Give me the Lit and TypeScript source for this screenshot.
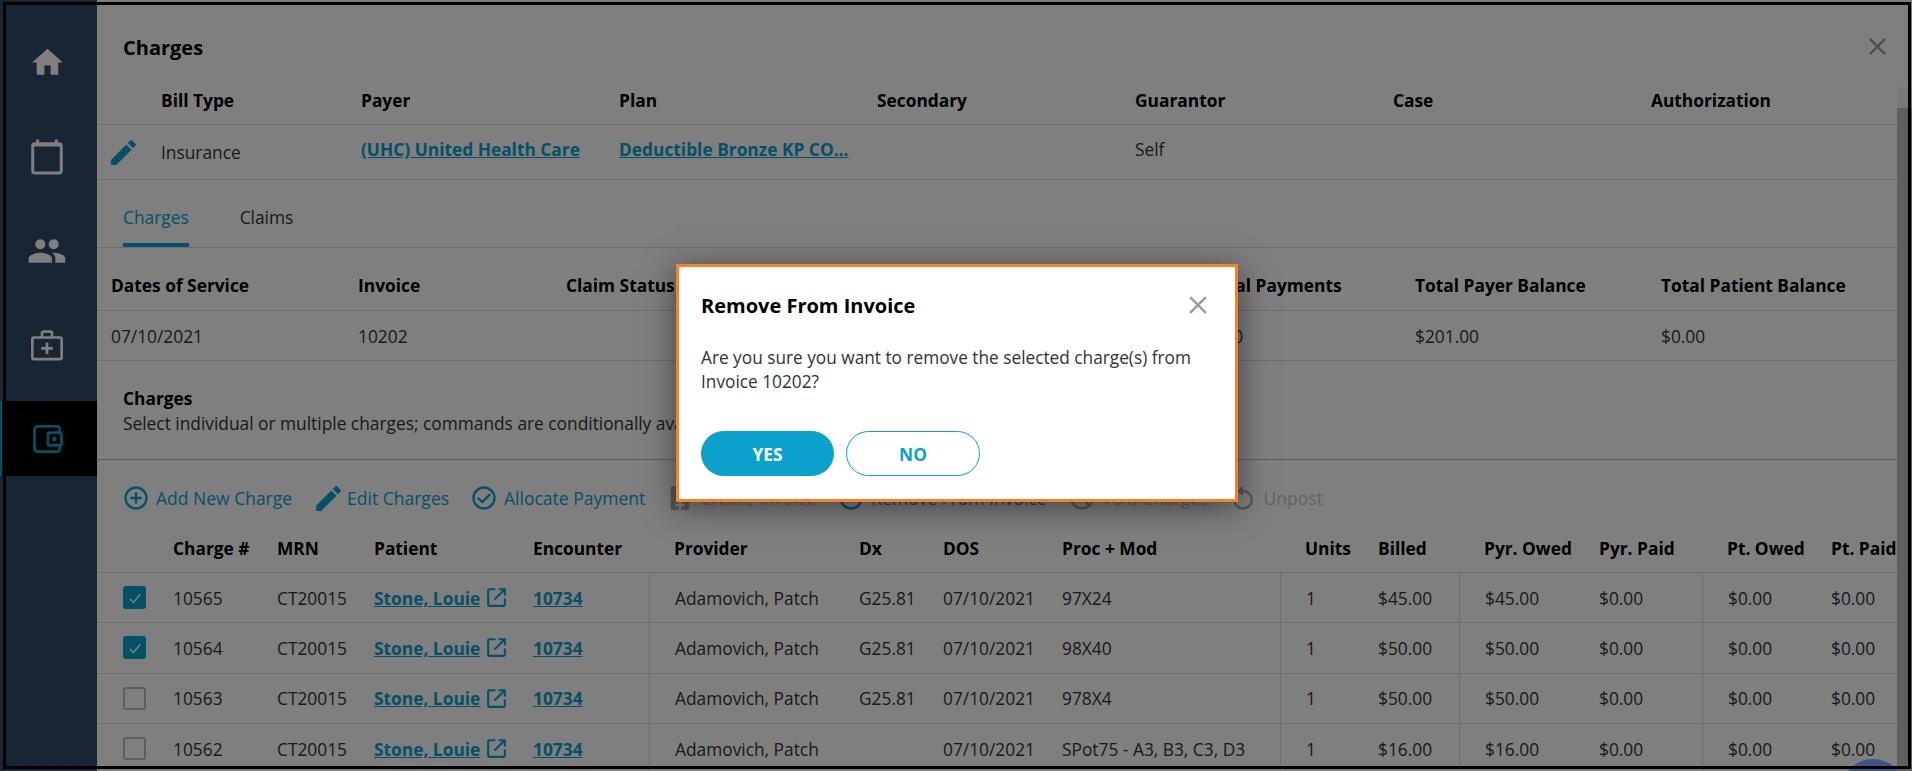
import { LitElement, css, html, svg } from "lit";
import { customElement } from "lit/decorators.js";

type Charge = {
  checked: boolean;
  id: string;
  dx: string;
  proc: string;
  billed: string;
};

const charges: Charge[] = [
  { checked: true, id: "10565", dx: "G25.81", proc: "97X24", billed: "$45.00" },
  { checked: true, id: "10564", dx: "G25.81", proc: "98X40", billed: "$50.00" },
  { checked: false, id: "10563", dx: "G25.81", proc: "978X4", billed: "$50.00" },
  { checked: false, id: "10562", dx: "", proc: "SPot75 - A3, B3, C3, D3", billed: "$16.00" },
];

const icon = (size: number, body: unknown, cls = "") =>
  html`<svg class=${cls} width=${size} height=${size} viewBox="0 0 24 24" fill="currentColor">${body}</svg>`;

const pencil = svg`<path d="M3 17.25V21h3.75L17.81 9.94l-3.75-3.75L3 17.25zM20.71 7.04a1 1 0 0 0 0-1.41l-2.34-2.34a1 1 0 0 0-1.41 0l-1.83 1.83 3.75 3.75 1.83-1.83z"/>`;
const close = svg`<path d="M19 6.41 17.59 5 12 10.59 6.41 5 5 6.41 10.59 12 5 17.59 6.41 19 12 13.41 17.59 19 19 17.59 13.41 12z"/>`;
const home = svg`<path d="M10 20v-6h4v6h5v-8h3L12 3 2 12h3v8z"/>`;
const calendar = svg`<path fill-rule="evenodd" d="M5 3.6h.8V2h1.7v1.6h9V2h1.7v1.6h.8a2 2 0 0 1 2 2V20a2 2 0 0 1-2 2H5a2 2 0 0 1-2-2V5.6a2 2 0 0 1 2-2zM4.7 6v14.3h14.6V6z"/>`;
const people = svg`<path d="M16 11a3 3 0 1 0 0-6 3 3 0 0 0 0 6zm-8 0a3 3 0 1 0 0-6 3 3 0 0 0 0 6zm0 2c-2.33 0-7 1.17-7 3.5V19h14v-2.5C15 14.17 10.33 13 8 13zm8 0c-.29 0-.62.02-.97.05C16.19 13.89 17 15.02 17 16.5V19h6v-2.5c0-2.33-4.67-3.5-7-3.5z"/>`;
const medical = svg`<g fill="none" stroke="currentColor" stroke-width="1.6"><rect x="3.2" y="7.5" width="17.6" height="13" rx="1"/><path d="M9 7.5V5a1 1 0 0 1 1-1h4a1 1 0 0 1 1 1v2.5M12 10.5v7M8.5 14h7"/></g>`;
const wallet = svg`<g fill="none" stroke="currentColor" stroke-width="1.7"><rect x="3.5" y="4" width="16" height="16" rx="2"/><rect x="12" y="8" width="8.5" height="8" rx="1" fill="#000"/></g><circle cx="16" cy="12" r="1.5"/>`;
const plusCircle = svg`<path d="M13 7h-2v4H7v2h4v4h2v-4h4v-2h-4z"/><path d="M12 2a10 10 0 1 0 0 20 10 10 0 0 0 0-20zm0 18a8 8 0 1 1 0-16 8 8 0 0 1 0 16z"/>`;
const checkCircle = svg`<path d="M12 2a10 10 0 1 0 0 20 10 10 0 0 0 0-20zm0 18a8 8 0 1 1 0-16 8 8 0 0 1 0 16z"/><path d="m16.6 8-6.1 6.2-3.1-3.1L6 12.5l4.5 4.5L18 9.4z"/>`;
const ring = svg`<path d="M12 2a10 10 0 1 0 0 20 10 10 0 0 0 0-20zm0 18a8 8 0 1 1 0-16 8 8 0 0 1 0 16z"/>`;
const slashed = svg`<path d="M12 2a10 10 0 1 0 0 20 10 10 0 0 0 0-20zm0 18a8 8 0 1 1 0-16 8 8 0 0 1 0 16z"/><path d="M18.4 19.8 4.2 5.6l1.4-1.4 14.2 14.2z"/>`;
const doc = svg`<path d="M5 2h14a1 1 0 0 1 1 1v18a1 1 0 0 1-1 1H5a1 1 0 0 1-1-1V3a1 1 0 0 1 1-1z"/><path fill="#fff" d="M11 14h2v3h3v2h-3v3h-2v-3H8v-2h3z"/>`;
const undo = svg`<path d="M12 5V1.5L7 6l5 4.5V7a6.5 6.5 0 1 1-6.5 6.5h-2A8.5 8.5 0 1 0 12 5z"/>`;
const external = svg`<path d="M19 19H5V5h6V3H5a2 2 0 0 0-2 2v14a2 2 0 0 0 2 2h14a2 2 0 0 0 2-2v-6h-2z"/><path d="M14 3v2h3.6l-8.3 8.3 1.4 1.4L19 6.4V10h2V3z"/>`;

@customElement("app-root")
export class AppRoot extends LitElement {
  static styles = css`
    :host {
      display: block;
      font-family: "Open Sans", "Liberation Sans", sans-serif;
      font-size: 17.33px;
      color: #333;
    }
    * {
      box-sizing: border-box;
    }

    .page {
      height: 771px;
      display: flex;
      background: #fff;
      overflow: hidden;
      position: relative;
    }

    .side {
      width: 97px;
      flex: none;
      background: #324a66;
      color: #fff;
      display: flex;
      flex-direction: column;
      padding-top: 25px;
    }
    .side div {
      height: 75px;
      flex: none;
      margin-bottom: 19px;
      display: flex;
      align-items: center;
      justify-content: center;
    }
    .side svg {
      margin-left: -3px;
    }
    .side .on {
      background: #000;
      color: #0ba1cc;
      border-left: 2px solid #0ba1cc;
      margin-bottom: 0;
    }

    .main {
      flex: 1;
      min-width: 0;
      display: flex;
      flex-direction: column;
      position: relative;
      padding-right: 15px;
    }
    .main > * {
      flex: none;
    }

    h1 {
      margin: 0;
      font-size: 20px;
      font-weight: 700;
      color: #000;
      line-height: 24px;
      padding: 36px 0 0 26px;
      height: 80px;
    }
    .x {
      position: absolute;
      top: 32px;
      right: 20px;
      color: #9c9c9c;
      display: flex;
    }

    .row {
      display: grid;
      align-items: center;
      border-bottom: 1px solid #ddd;
      white-space: nowrap;
    }
    .head {
      font-weight: 700;
      color: #000;
    }
    a {
      color: #0ba1cc;
      font-weight: 700;
      text-decoration: underline;
    }

    .bill {
      grid-template-columns: 64px 200px 258px 258px 258px 258px 258px 1fr;
    }
    .bill.head {
      height: 45px;
      padding-bottom: 5px;
    }
    .bill.body {
      height: 55px;
    }
    .bill .edit {
      color: #0ba1cc;
      padding-left: 10px;
      display: flex;
    }
    .bill .nudge {
      margin-top: -6px;
    }

    .tabs {
      display: flex;
      gap: 51px;
      padding-left: 26px;
      height: 68px;
      border-bottom: 1px solid #ddd;
      align-items: stretch;
    }
    .tabs span {
      padding-top: 25px;
    }
    .tabs .on {
      color: #0ba1cc;
      border-bottom: 4px solid #0ba1cc;
    }

    .sum {
      padding-left: 14px;
    }
    .sum.head {
      grid-template-columns: 247px 208px 321px 320px 208px 246px 1fr;
      height: 63px;
      padding-top: 12px;
    }
    .sum.body {
      grid-template-columns: 247px 208px 321px 312px 216px 246px 1fr;
      height: 50px;
    }

    .note {
      height: 99px;
      padding: 25px 0 0 26px;
      line-height: 25px;
      border-bottom: 1px solid #bbb;
      white-space: nowrap;
    }
    .note b {
      display: block;
      font-weight: 700;
      color: #000;
    }

    .tools {
      display: flex;
      align-items: center;
      height: 76px;
      padding-left: 25px;
      color: #0ba1cc;
      font-size: 17.5px;
      gap: 21px;
      white-space: nowrap;
    }
    .tools span {
      display: flex;
      align-items: center;
      gap: 6px;
    }
    .tools .pen {
      margin: 0 -4px 0 -1px;
    }
    .tools .off {
      color: #c6c6c6;
    }
    .tools .off svg {
      color: #aaa;
    }

    .grid {
      grid-template-columns: 76px 104px 97px 159px 116px 210px 84px 119px 218px 98px 81px 140px 103px 129px 1fr;
    }
    .grid.head {
      height: 37px;
      padding-bottom: 14px;
    }
    .grid.body {
      height: 50.33px;
      align-items: stretch;
    }
    .grid.body > * {
      display: flex;
      align-items: center;
    }
    .grid .rule {
      border-left: 1px solid #ddd;
    }
    .grid .pad {
      padding-left: 25px;
    }
    .box {
      margin-left: 26px;
      width: 23px;
      height: 23px;
      border: 2px solid #bdbdbd;
      border-radius: 3px;
      color: #fff;
      display: flex;
      align-items: center;
      justify-content: center;
    }
    .box.on {
      background: #0ba1cc;
      border-color: #0ba1cc;
    }
    .ext {
      color: #0ba1cc;
      margin-left: 4px;
    }

    .track {
      position: absolute;
      top: 87px;
      right: 0;
      bottom: 0;
      width: 15px;
      background: #f1f1f1;
      padding-top: 21px;
    }
    .thumb {
      height: 100%;
      background: #bfbfbf;
    }

    .chat {
      position: absolute;
      right: 7px;
      bottom: -52px;
      width: 64px;
      height: 64px;
      border-radius: 50%;
      background: #7aaaff;
    }

    .shade {
      position: absolute;
      inset: 0;
      background: rgba(0, 0, 0, 0.5);
      display: flex;
      align-items: flex-start;
      justify-content: center;
    }
    .frame {
      position: absolute;
      top: 2px;
      left: 3px;
      right: 1px;
      bottom: 2px;
      border: 3px solid #000;
      pointer-events: none;
    }

    .dlg {
      margin: 264px 0 0 2px;
      width: 562px;
      height: 238px;
      background: #fff;
      border: 3px solid #f97f2a;
      padding: 23px 22px 0 22px;
      box-shadow: 0 5px 30px rgba(0, 0, 0, 0.5);
      position: relative;
    }
    .dlg h2 {
      margin: 0 0 24px;
      font-size: 20px;
      line-height: 32px;
      font-weight: 700;
      color: #000;
    }
    .dlg p {
      margin: 0;
      font-size: 17.25px;
      line-height: 24px;
    }
    .dlg .x {
      top: 23px;
      right: 22px;
    }
    .btns {
      display: flex;
      gap: 12px;
      margin-top: 37px;
    }
    button {
      width: 134px;
      height: 45px;
      border-radius: 23px;
      border: 1px solid #0ba1cc;
      background: #fff;
      color: #0ba1cc;
      font: 700 17.33px "Open Sans", sans-serif;
    }
    button.yes {
      width: 133px;
      background: #0ba1cc;
      color: #fff;
    }
  `;

  private renderCharge(c: Charge) {
    return html`<div class="row grid body">
      <div>
        <span class="box ${c.checked ? "on" : ""}">
          ${c.checked
            ? html`<svg width="18" height="18" viewBox="0 0 24 24" fill="none" stroke="currentColor" stroke-width="2"><path d="m5 13 5 5 9-11" /></svg>`
            : ""}
        </span>
      </div>
      <div>${c.id}</div>
      <div>CT20015</div>
      <div><a>Stone, Louie</a>${icon(25, external, "ext")}</div>
      <div><a>10734</a></div>
      <div class="rule pad">Adamovich, Patch</div>
      <div>${c.dx}</div>
      <div>07/10/2021</div>
      <div>${c.proc}</div>
      <div class="rule pad">1</div>
      <div>${c.billed}</div>
      <div class="rule pad">${c.billed}</div>
      <div>$0.00</div>
      <div class="rule pad">$0.00</div>
      <div>$0.00</div>
    </div>`;
  }

  render() {
    return html`<div class="page">
      <nav class="side">
        <div>${icon(37, home)}</div>
        <div>${icon(42, calendar)}</div>
        <div>${icon(40, people)}</div>
        <div>${icon(40, medical)}</div>
        <div class="on">${icon(38, wallet)}</div>
      </nav>
      <main class="main">
        <h1>Charges</h1>
        <span class="x">${icon(29, close)}</span>

        <div class="row bill head">
          <span></span><span>Bill Type</span>
          <span>Payer</span><span>Plan</span><span>Secondary</span>
          <span>Guarantor</span><span>Case</span><span>Authorization</span>
        </div>
        <div class="row bill body">
          <span class="edit">${icon(33, pencil)}</span>
          <span>Insurance</span>
          <a class="nudge">(UHC) United Health Care</a>
          <a class="nudge">Deductible Bronze KP CO...</a>
          <span></span>
          <span class="nudge">Self</span>
          <span></span><span></span>
        </div>

        <div class="tabs"><span class="on">Charges</span><span>Claims</span></div>

        <div class="row sum head">
          <span>Dates of Service</span><span>Invoice</span><span>Claim Status</span>
          <span></span><span>Total Payments</span>
          <span>Total Payer Balance</span><span>Total Patient Balance</span>
        </div>
        <div class="row sum body">
          <span>07/10/2021</span><span>10202</span><span></span><span></span>
          <span>$0.00</span><span>$201.00</span><span>$0.00</span>
        </div>

        <div class="note">
          <b>Charges</b>
          Select individual or multiple charges; commands are conditionally available
        </div>

        <div class="tools">
          <span>${icon(28, plusCircle)}Add New Charge</span>
          <span>${icon(33, pencil, "pen")}Edit Charges</span>
          <span>${icon(28, checkCircle)}Allocate Payment</span>
          <span class="off">${icon(28, doc)}Create Invoice</span>
          <span>${icon(28, ring)}Remove From Invoice</span>
          <span class="off">${icon(28, slashed)}Void Charges</span>
          <span class="off">${icon(28, undo)}Unpost</span>
        </div>

        <div class="row grid head">
          <span></span><span>Charge #</span><span>MRN</span><span>Patient</span>
          <span>Encounter</span><span class="pad">Provider</span><span>Dx</span>
          <span>DOS</span><span>Proc + Mod</span><span class="pad">Units</span>
          <span>Billed</span><span class="pad">Pyr. Owed</span><span>Pyr. Paid</span>
          <span class="pad">Pt. Owed</span><span>Pt. Paid</span>
        </div>
        ${charges.map((c) => this.renderCharge(c))}

        <div class="track"><div class="thumb"></div></div>
        <div class="chat"></div>
      </main>

      <div class="shade">
        <section class="dlg">
          <h2>Remove From Invoice</h2>
          <span class="x">${icon(30, close)}</span>
          <p>Are you sure you want to remove the selected charge(s) from<br />Invoice 10202?</p>
          <div class="btns">
            <button class="yes">YES</button>
            <button>NO</button>
          </div>
        </section>
      </div>
      <div class="frame"></div>
    </div>`;
  }
}
